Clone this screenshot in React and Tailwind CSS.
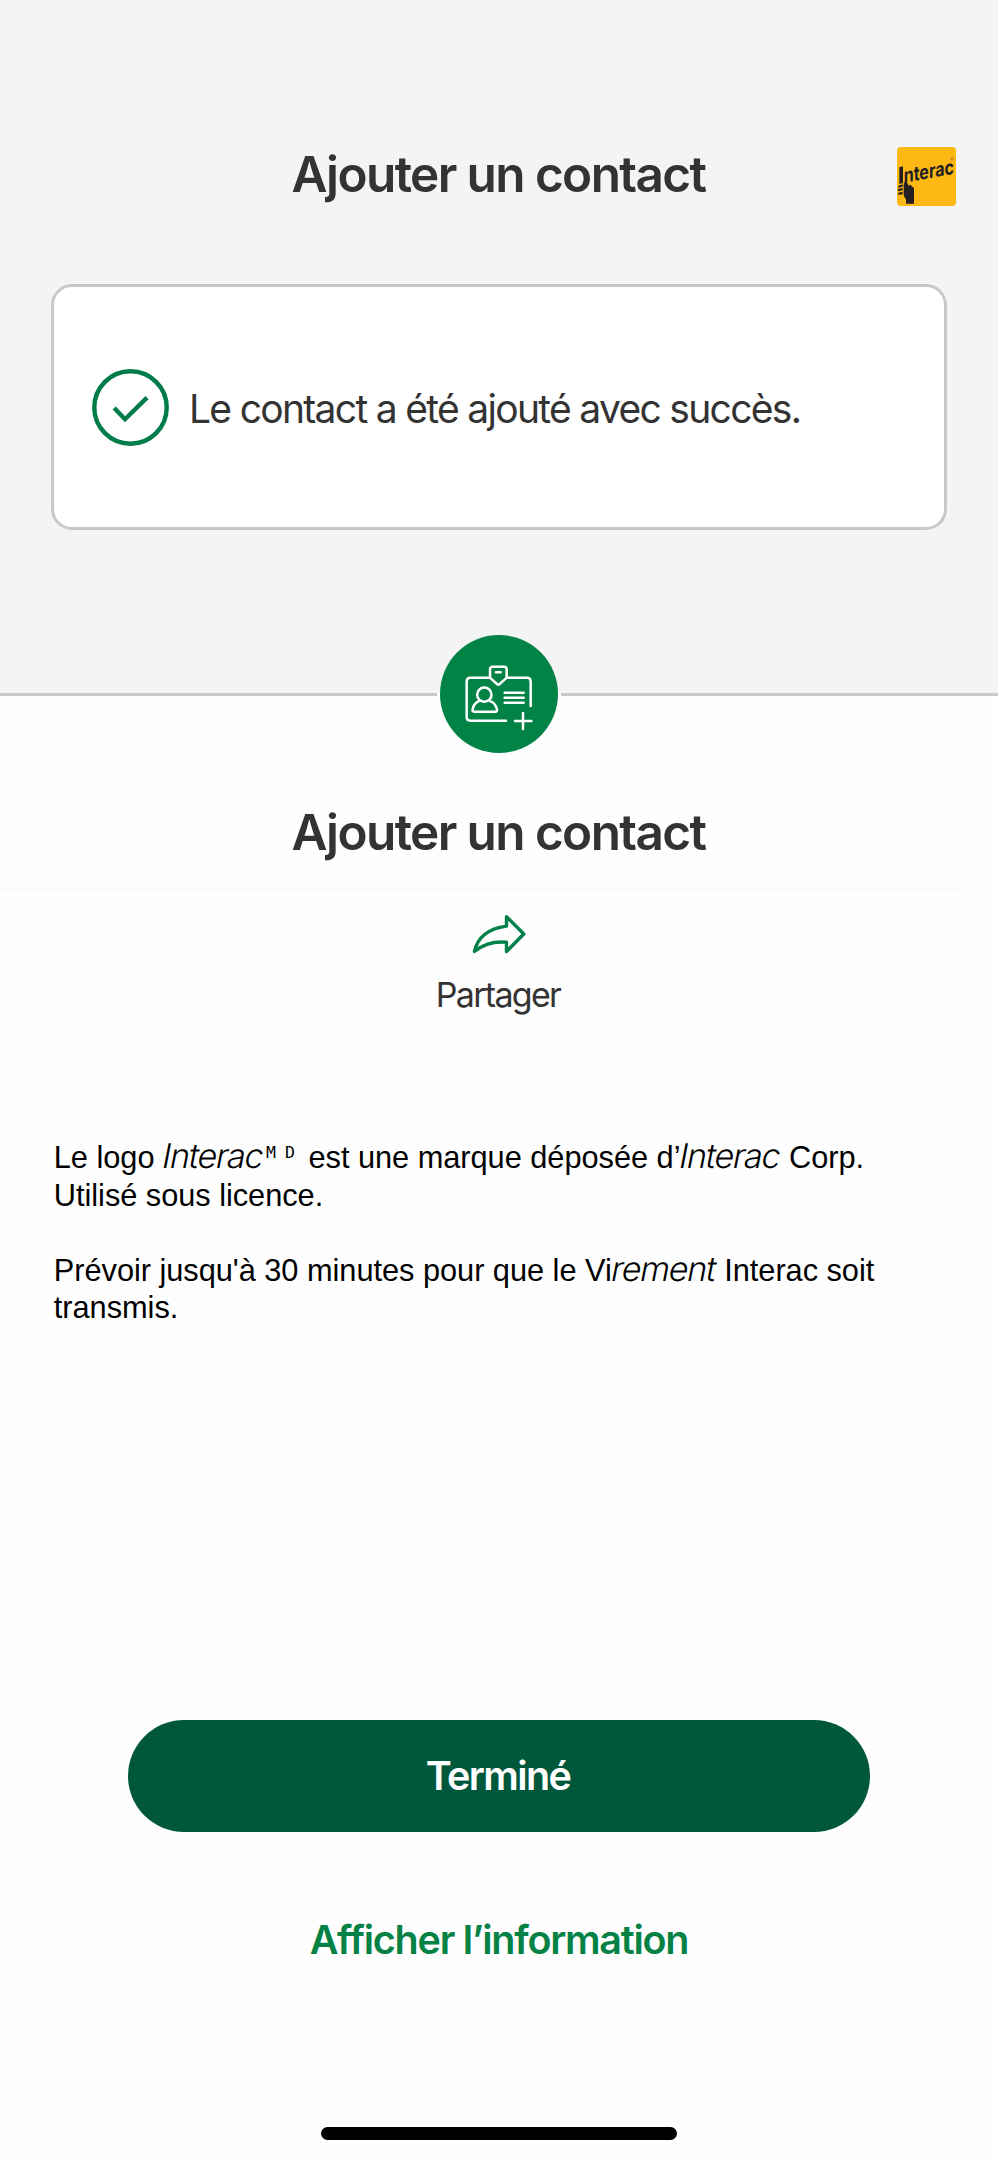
import React from "react";

function InteracLogo() {
  return (
    <svg className="size-[59px] overflow-visible" viewBox="0 0 177 177" role="img" aria-label="Interac">
      <rect width="177" height="177" rx="11" fill="#fdb813" />
      <g fill="#231f20">
        <path d="M7 61L18 58V108L7 111Z" />
        <g transform="translate(20 107) skewY(-10)">
          <text
            x="0"
            y="0"
            fontFamily="Inter, sans-serif"
            fontWeight="700"
            fontSize="60"
            textLength="151"
            lengthAdjust="spacingAndGlyphs"
          >
            nterac
          </text>
        </g>
        <path d="M4 116L17 112V119L4 122ZM3 126L17 123V130L3 133ZM4 137L17 134V142L4 144Z" />
        <path d="M20 112C21 105 25 103 29 104L36 118C37 111 43 113 44 118L51 123V170H27V157C22 150 19 145 20 138Z" />
      </g>
      <circle cx="166" cy="35" r="4" fill="none" stroke="#8a6a1c" strokeWidth="2" />
    </svg>
  );
}

function CheckCircle() {
  return (
    <svg className="size-[77px] shrink-0" viewBox="0 0 77 77" fill="none" stroke="#007c4b" strokeWidth="4.4">
      <circle cx="38.5" cy="38.5" r="36.2" />
      <path d="M22.2 39L33 50.2L55 28.6" />
    </svg>
  );
}

function ContactBadge() {
  return (
    <svg
      className="size-[118px]"
      viewBox="61 43 354 354"
      fill="none"
      stroke="#fff"
      strokeWidth="7.5"
      strokeLinecap="round"
      strokeLinejoin="round"
    >
      <circle cx="238" cy="220" r="177" fill="#008345" stroke="none" />
      <path d="M210 171.5H152Q141 171.5 141 182.5V289Q141 300 152 300H259M263 171.5H322Q333 171.5 333 182.5V256" />
      <path d="M219 138.5H253Q261 138.5 261 146.5V166Q261 170 258 174L240 190Q236 194 232 190L214 174Q211 170 211 166V146.5Q211 138.5 219 138.5Z" />
      <path d="M229 155H243" />
      <circle cx="194" cy="222" r="21.5" />
      <path d="M180 240Q161 248 158.5 268Q158 273 163 273H227Q233 273 232 267Q229 247 208 240" />
      <path d="M255 216H312M255 231H312M255 246H312M310 277V325M286 301H335" />
    </svg>
  );
}

function ShareArrow() {
  return (
    <svg
      className="h-[42px] w-[56px]"
      viewBox="0 0 56 42"
      fill="none"
      stroke="#00814a"
      strokeWidth="3.4"
      strokeLinejoin="round"
    >
      <path d="M35.5 3.7L52.8 21L35.5 38.5V29.2C23.8 28.2 12 31.5 3.4 38.5C6.5 24.5 17.8 15.5 35.5 13.1Z" />
    </svg>
  );
}

function Slanted({ children, className }) {
  return (
    <span className={`inline-block whitespace-nowrap leading-[30px] ${className}`}>
      <span className="-ml-[3px] inline-block origin-bottom-left -skew-x-[11deg] font-['Inter'] text-[34px] font-light leading-[30px]">
        {children}
      </span>
    </span>
  );
}

function Title() {
  return (
    <h1 className="text-center text-[49.5px] font-semibold leading-[60px] tracking-[-1.6px] text-[#333333]">
      Ajouter un contact
    </h1>
  );
}

export default function App() {
  return (
    <div className="flex h-[2160px] w-[998px] flex-col overflow-hidden bg-[#fefefe] font-['Inter',sans-serif] text-[#333333]">
      <header className="flex h-[693px] flex-col bg-[#f4f4f4]">
        <div className="mt-[144px] grid h-[62px] grid-cols-[100px_1fr_101px] items-start">
          <div />
          <Title />
          <div className="pt-[3px]">
            <InteracLogo />
          </div>
        </div>
        <div className="ml-[51px] mt-[78px] flex h-[246px] w-[896px] items-center gap-[20px] rounded-[21px] border-[3px] border-[#c8c8c8] bg-white pl-[38px]">
          <CheckCircle />
          <p className="pt-[3px] text-[39px] leading-[40px] tracking-[-1.69px]">Le contact a été ajouté avec succès.</p>
        </div>
      </header>

      <div className="flex h-[3px] items-center justify-between">
        <div className="h-[3px] w-[437px] bg-[#c9c9c9]" />
        <div className="relative z-10 -mt-[2px] h-[118px] w-[118px] shrink-0">
          <ContactBadge />
        </div>
        <div className="h-[3px] w-[437px] bg-[#c9c9c9]" />
      </div>

      <section className="mt-[106px] flex flex-col">
        <div className="pr-px">
          <Title />
        </div>
        <div className="mt-[26px] h-[2px] w-[960px] bg-[#fafafa]" />
        <button className="mt-[23px] flex flex-col items-center">
          <ShareArrow />
          <span className="mr-[2px] mt-[19.5px] text-[34px] leading-[40px] tracking-[-1.7px]">Partager</span>
        </button>
      </section>

      <section className="ml-[53.8px] mt-[124.5px] flex flex-col gap-[37.5px] whitespace-nowrap font-['Liberation_Sans'] text-[30.75px] leading-[37.5px] tracking-[-0.03px] text-black">
        <p className="h-[75px]">
          Le logo <Slanted className="w-[101px] tracking-[-1.2px]">Interac</Slanted>
          <span className="inline-block w-[36px] pl-[2px] font-['DejaVu_Sans_Mono'] text-[16.5px] leading-[17px] tracking-[9px]">
            <span className="relative -top-[10px]">MD</span>
          </span>{" "}
          est une marque déposée d’
          <Slanted className="w-[100px] tracking-[-1.2px]">Interac</Slanted> Corp.
          <br />
          Utilisé sous licence.
        </p>
        <p className="h-[75px]">
          Prévoir jusqu'à 30 minutes pour que le Vi
          <Slanted className="w-[104px] tracking-[-1.2px]">rement</Slanted> Interac soit
          <br />
          transmis.
        </p>
      </section>

      <div className="mt-[393.5px] flex flex-col items-center">
        <button className="h-[112px] w-[742px] rounded-full bg-[#00583c] pr-[2px] text-[39.5px] font-semibold leading-[40px] tracking-[-1.6px] text-white">
          Terminé
        </button>
        <button className="mt-[88px] text-[39.5px] font-semibold leading-[40px] tracking-[-1.25px] text-[#048245]">
          Afficher l’information
        </button>
        <div className="mt-[167px] h-[13px] w-[356px] rounded-full bg-black" />
      </div>
    </div>
  );
}
